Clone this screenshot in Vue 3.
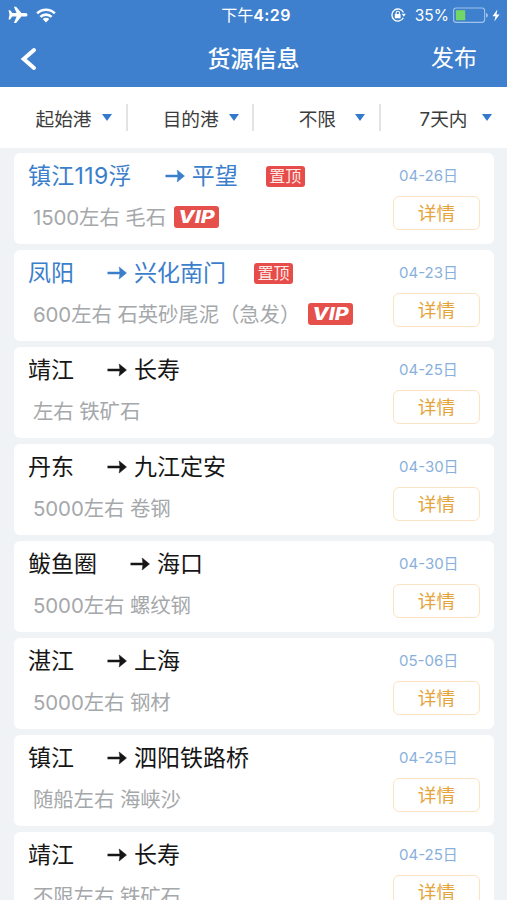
<script setup>
const filters = ['起始港', '目的港', '不限', '7天内']

const items = [
  { from: '镇江119浮', to: '平望', cargo: '1500左右 毛石', date: '04-26日', top: true },
  { from: '凤阳', to: '兴化南门', cargo: '600左右 石英砂尾泥（急发）', date: '04-23日', top: true },
  { from: '靖江', to: '长寿', cargo: '左右 铁矿石', date: '04-25日' },
  { from: '丹东', to: '九江定安', cargo: '5000左右 卷钢', date: '04-30日' },
  { from: '鲅鱼圈', to: '海口', cargo: '5000左右 螺纹钢', date: '04-30日' },
  { from: '湛江', to: '上海', cargo: '5000左右 钢材', date: '05-06日' },
  { from: '镇江', to: '泗阳铁路桥', cargo: '随船左右 海峡沙', date: '04-25日' },
  { from: '靖江', to: '长寿', cargo: '不限左右 铁矿石', date: '04-25日' },
]
</script>

<template>
  <div class="screen">
    <header class="top">
      <div class="status">
        <div class="status-left">
          <svg class="plane" viewBox="0 0 20 18" width="20" height="18">
            <path d="M.5 4.200h1.700L4.300 7h4.300L5.900.8h2.200l5.300 6.200h4c1.300 0 2.100.9 2.100 1.800s-.8 1.800-2.100 1.800h-4l-5.300 6.300H5.900l2.700-6.300H4.300L2.200 13.400H.5l1-4.800z" fill="#fff" />
          </svg>
          <svg class="wifi" viewBox="0 0 20 15" width="20" height="15">
            <g fill="none" stroke="#fff" stroke-width="2.600">
              <path d="M1.200 5.300a12.500 12.500 0 0 1 17.600 0" />
              <path d="M4.400 8.900a8 8 0 0 1 11.200 0" />
            </g>
            <path d="M6.700 11.100a4.700 4.700 0 0 1 6.600 0L10 14.400z" fill="#fff" />
          </svg>
        </div>
        <div class="time">下午<span class="clock">4:29</span></div>
        <div class="status-right">
          <svg class="lock" viewBox="0 0 16 16" width="16" height="16">
            <path d="M13.300 10.700A6 6 0 1 1 13.400 5.600" fill="none" stroke="#fff" stroke-width="1.300" />
            <path d="M11.700 6.800h4.100L13.800 9.800z" fill="#fff" />
            <rect x="4.800" y="6.900" width="5.800" height="4.400" rx=".6" fill="#fff" />
            <path d="M6.100 7.500V6a1.700 1.700 0 0 1 3.400 0v1.500" fill="none" stroke="#fff" stroke-width="1.100" />
          </svg>
          <span class="percent">35%</span>
          <svg class="battery" viewBox="0 0 36 17" width="36" height="17">
            <rect x=".6" y="1" width="31" height="14.400" rx="2.600" fill="none" stroke="#9fc3ec" stroke-width="1.100" />
            <rect x="2.900" y="3.200" width="9.300" height="10" fill="#72d767" />
            <path d="M33 6v4.600c1.300-.4 1.900-1.200 1.900-2.300S34.300 6.400 33 6z" fill="#9fc3ec" />
          </svg>
          <svg class="bolt" viewBox="0 0 8 13" width="8" height="13">
            <path d="M5.400.5L.5 7.300h3L2.300 12.500 7.600 5.500H4.500z" fill="#fff" />
          </svg>
        </div>
      </div>
      <nav class="nav">
        <svg class="back" viewBox="0 0 17 24" width="17" height="24">
          <path d="M14 3L3.700 12l10.300 9" fill="none" stroke="#fff" stroke-width="4" stroke-linecap="round" stroke-linejoin="miter" />
        </svg>
        <h1>货源信息</h1>
        <span class="publish">发布</span>
      </nav>
    </header>

    <div class="filters">
      <div v-for="f in filters" :key="f" class="filter">
        <span class="filter-label">{{ f }}</span>
        <i class="caret"></i>
      </div>
    </div>

    <main class="list">
      <article v-for="(item, i) in items" :key="i" class="card" :class="{ pinned: item.top }">
        <div class="info">
          <div class="route">
            <span class="port">{{ item.from }}</span>
            <svg class="arrow" viewBox="0 0 20 14" width="20" height="14">
              <path d="M.5 7h14" fill="none" stroke="currentColor" stroke-width="2.500" />
              <path d="M12.200 1L19.500 7l-7.300 6 .8-6z" fill="currentColor" stroke="currentColor" stroke-width=".5" />
            </svg>
            <span>{{ item.to }}</span>
            <span v-if="item.top" class="tag">置顶</span>
          </div>
          <div class="cargo">
            <span>{{ item.cargo }}</span>
            <span v-if="item.top" class="vip"><b>VIP</b></span>
          </div>
        </div>
        <div class="side">
          <span class="date">{{ item.date }}</span>
          <span class="detail">详情</span>
        </div>
      </article>
    </main>
  </div>
</template>

<style>
body {
  margin: 0;
  overflow: hidden;
}
</style>

<style scoped>
.screen {
  width: 507px;
  height: 900px;
  overflow: hidden;
  display: flex;
  flex-direction: column;
  background: #eff3f6;
  font-family: Inter, "Noto Sans CJK SC", sans-serif;
  white-space: nowrap;
}
.top {
  flex: none;
  height: 87px;
  background: #3e80cd;
  color: #fff;
}
.status {
  height: 29px;
  display: grid;
  grid-template-columns: 1fr 90px 1fr;
  align-items: center;
}
.status-left {
  display: flex;
  align-items: center;
  gap: 8px;
  padding-left: 8px;
}
.plane {
  margin-top: -1px;
}
.time {
  padding: 1px 0 0 5px;
  text-align: center;
  font-size: 16px;
  font-weight: 400;
  line-height: 29px;
}
.clock {
  font-weight: 600;
  letter-spacing: 0.4px;
}
.status-right {
  display: flex;
  align-items: center;
  justify-content: flex-end;
  padding-right: 7px;
}
.percent {
  margin: 0 4px 0 9px;
  padding-top: 1px;
  font-size: 15.500px;
  line-height: 29px;
}
.bolt {
  margin-left: 3px;
}
.nav {
  height: 57px;
  display: grid;
  grid-template-columns: 1fr 100px 1fr;
  align-items: center;
}
.back {
  margin-left: 20px;
}
h1 {
  margin: 0;
  padding-top: 2px;
  font-size: 23px;
  font-weight: 500;
  line-height: 57px;
  text-align: center;
}
.publish {
  justify-self: end;
  padding-right: 30px;
  font-size: 23px;
  line-height: 55px;
}
.filters {
  flex: none;
  height: 61px;
  display: grid;
  grid-template-columns: repeat(4, 126.700px);
  align-items: center;
  background: #fff;
}
.filter {
  height: 27px;
  display: flex;
  align-items: center;
}
.filter:not(:last-child)::after {
  content: "";
  width: 2px;
  height: 27px;
  margin: 0 -1px 0 auto;
  background: #e3e3e3;
}
.filter-label {
  width: 76px;
  margin-left: 26px;
  text-align: center;
  font-size: 18.700px;
  line-height: 27px;
  padding-top: 4px;
  color: #3c3c3c;
}
.filter:first-child .filter-label,
.filter:last-child .filter-label {
  text-indent: -1px;
}
.caret {
  border: 5px solid transparent;
  border-top: 7px solid #3579ca;
  border-bottom: 0;
}
.list {
  display: flex;
  flex-direction: column;
  gap: 6px;
  padding: 5px 13px 0 14px;
}
.card {
  flex: none;
  box-sizing: border-box;
  height: 91px;
  display: flex;
  justify-content: space-between;
  padding: 0 14px;
  border-radius: 6px;
  background: #fff;
  color: #161616;
}
.pinned {
  color: #3b7ecb;
}
.route {
  height: 45px;
  display: flex;
  align-items: center;
  font-size: 23px;
  line-height: 45px;
}
.route > span {
  padding-top: 2px;
}
.card:first-child .port {
  letter-spacing: 0.300px;
}
.arrow {
  margin: 0 7px 0 33px;
}
.route > .tag {
  box-sizing: border-box;
  width: 39px;
  height: 21px;
  margin: 2px 0 0 28px;
  padding: 0;
  border-radius: 3px;
  background: #e64c49;
  color: #ffe9e6;
  font-size: 16px;
  line-height: 20px;
  text-align: center;
}
.cargo {
  height: 38px;
  display: flex;
  align-items: center;
  padding-left: 5px;
  font-size: 20.400px;
  line-height: 38px;
  color: #a5a8ab;
}
.cargo > span:first-child {
  padding-top: 2px;
  letter-spacing: -0.080px;
}
.vip {
  width: 45px;
  height: 22px;
  margin-left: 8px;
  display: flex;
  align-items: center;
  justify-content: center;
  border-radius: 3px;
  background: #e6504b;
  color: #fff;
  font-size: 17px;
  line-height: 22px;
}
.vip b {
  font-weight: 800;
  font-style: italic;
  transform: scaleX(1.250);
}
.side {
  width: 87px;
  display: flex;
  flex-direction: column;
}
.date {
  height: 43px;
  padding-left: 6px;
  font-size: 15px;
  line-height: 46px;
  color: #89b0dc;
}
.detail {
  box-sizing: border-box;
  height: 34px;
  border: 1.500px solid #fce3c3;
  border-radius: 6px;
  text-align: center;
  font-size: 18.700px;
  line-height: 33px;
  color: #e5a43c;
}
</style>
